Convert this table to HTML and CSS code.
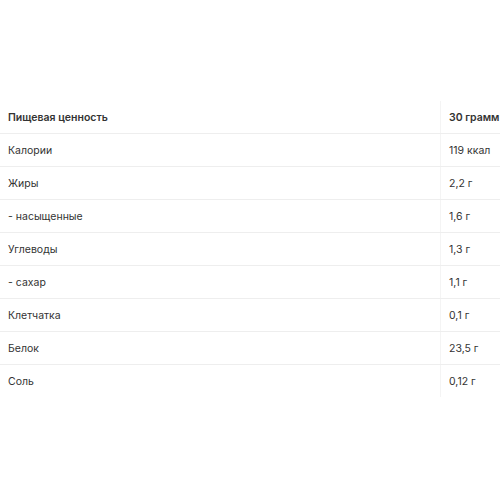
FILE: index.html
```html
<!DOCTYPE html>
<html>
<head>
<meta charset="utf-8">
<link rel="stylesheet" href="styles.css">
</head>
<body>
<table class="nutrition">
<thead>
<tr><th class="name">Пищевая ценность</th><th class="val">30 грамм</th></tr>
</thead>
<tbody>
<tr><td class="name">Калории</td><td class="val">119 ккал</td></tr>
<tr><td class="name">Жиры</td><td class="val">2,2 г</td></tr>
<tr><td class="name">- насыщенные</td><td class="val">1,6 г</td></tr>
<tr><td class="name">Углеводы</td><td class="val">1,3 г</td></tr>
<tr><td class="name">- сахар</td><td class="val">1,1 г</td></tr>
<tr><td class="name">Клетчатка</td><td class="val">0,1 г</td></tr>
<tr><td class="name">Белок</td><td class="val">23,5 г</td></tr>
<tr><td class="name">Соль</td><td class="val">0,12 г</td></tr>
</tbody>
</table>
</body>
</html>
```
FILE: styles.css
```css
html, body {
  margin: 0;
  background: #fff;
}
body {
  padding: 101px 0 0 0;
  font-family: Inter, "Noto Sans", sans-serif;
  font-size: 10.5px;
  color: #333;
}
.nutrition {
  width: 500px;
  border-collapse: collapse;
  table-layout: fixed;
}
.nutrition th, .nutrition td {
  height: 32px;
  padding: 0 8px;
  text-align: left;
  vertical-align: middle;
  white-space: nowrap;
  border-bottom: 1px solid #eeeeee;
}
.nutrition tr:last-child td {
  border-bottom: none;
}
.nutrition th {
  font-weight: 600;
}
.nutrition .name {
  width: 424px;
}
.nutrition .val {
  padding-right: 2px;
  border-left: 1px solid #f4f4f4;
}
```
